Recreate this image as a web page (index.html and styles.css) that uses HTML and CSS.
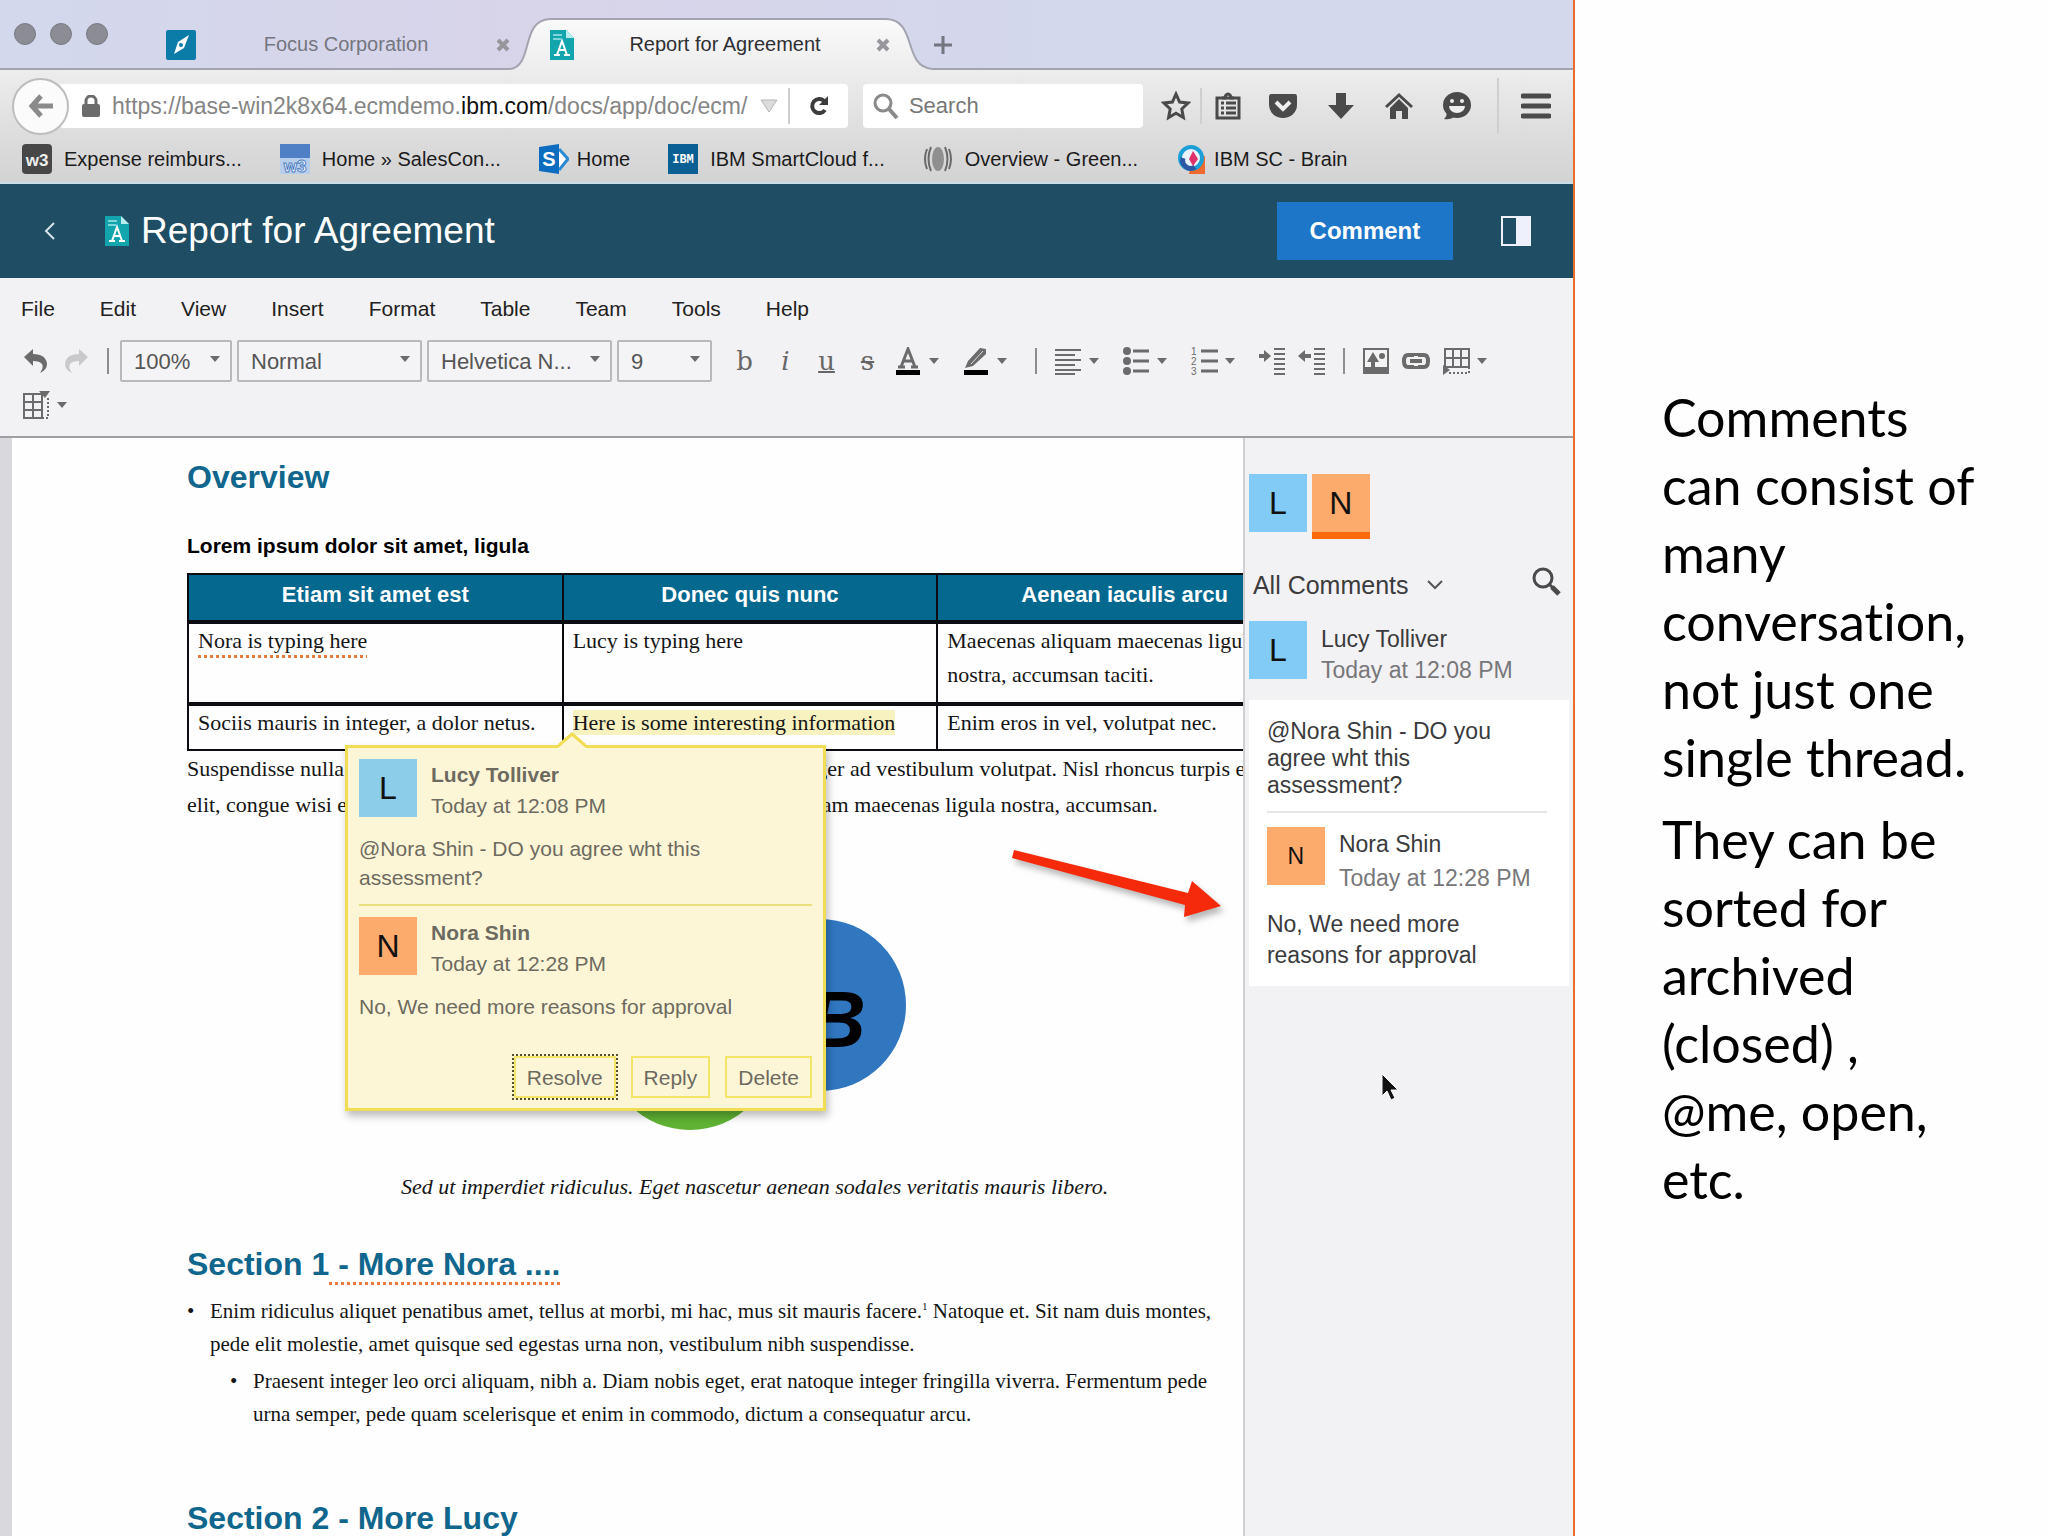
FILE: index.html
```html
<!DOCTYPE html>
<html lang="en">
<head>
<meta charset="utf-8">
<title>Report for Agreement</title>
<link rel="stylesheet" href="styles.css">
</head>
<body>
<svg class="sprite" aria-hidden="true">
  <symbol id="caret" viewBox="0 0 12 12"><path d="M1 3h10L6 9z" fill="#6b6b6b"/></symbol>
  <symbol id="docfile" viewBox="0 0 24 30">
    <path d="M0 0h16l8 8v22H0z" fill="#12a5ae"/><path d="M16 0l8 8h-8z" fill="#b9ecee"/>
    <path d="M3 5h9M3 9h8" stroke="#7fd6da" stroke-width="2"/>
    <path d="M4 25h6M14 25h6M7 25l5-14 5 14M9 20h6" stroke="#fff" stroke-width="2" fill="none"/>
  </symbol>
  <symbol id="cross" viewBox="0 0 14 14"><path d="M2 2l10 10M12 2L2 12" stroke="#96969c" stroke-width="4"/></symbol>
</svg>

<div class="slide">
  <main class="shot">
    <div class="tabs">
      <div class="lights"><i></i><i></i><i></i></div>
      <div class="tab">
        <svg class="ic30" viewBox="0 0 30 30"><rect width="30" height="30" rx="2" fill="#0b7ba8"/><path d="M8 24l4-12 11-7-5 13z" fill="#fff"/><circle cx="15" cy="15" r="2" fill="#0b7ba8"/></svg>
        <span>Focus Corporation</span>
        <button class="bare" aria-label="Close tab"><svg class="ic14" ><use href="#cross"/></svg></button>
      </div>
      <div class="tab active">
        <svg class="tab-shape" viewBox="0 0 422 70" preserveAspectRatio="none">
          <defs><linearGradient id="tg" x2="0" y2="1"><stop offset="0" stop-color="#fafafb"/><stop offset="1" stop-color="#ededee"/></linearGradient></defs>
          <path d="M0 69C24 66 10 20 40 19H376C408 20 392 66 422 69V70H0z" fill="url(#tg)"/>
          <path d="M0 69C24 66 10 20 40 19H376C408 20 392 66 422 69" fill="none" stroke="#a3a4af" stroke-width="2"/>
        </svg>
        <svg class="ic24"><use href="#docfile"/></svg>
        <span>Report for Agreement</span>
        <button class="bare" aria-label="Close tab"><svg class="ic14"><use href="#cross"/></svg></button>
      </div>
      <button class="bare plus" aria-label="New tab"><svg viewBox="0 0 18 18" class="ic18"><path d="M9 0v18M0 9h18" stroke="#73757f" stroke-width="3"/></svg></button>
    </div>

    <div class="nav">
      <button class="bare back" aria-label="Back"><svg viewBox="0 0 28 28" class="ic28"><path d="M14 4L5 14l9 10M6 14h20" fill="none" stroke="#8b8b8b" stroke-width="5"/></svg></button>
      <div class="url">
        <svg viewBox="0 0 18 22" class="lock"><rect y="9" width="18" height="13" rx="2" fill="#6c6c6c"/><path d="M4 10V6a5 5 0 0 1 10 0v4" fill="none" stroke="#6c6c6c" stroke-width="3"/></svg>
        <a href="#" class="address">https://base-win2k8x64.ecmdemo.<b>ibm.com</b>/docs/app/doc/ecm/</a>
        <svg viewBox="0 0 18 14" class="drop"><path d="M1 1h16L9 13z" fill="#dcdcdc" stroke="#b5b5b5"/></svg>
        <i class="rule"></i>
        <button class="bare reload" aria-label="Reload"><svg viewBox="0 0 22 22" class="ic22"><path d="M17 15a7 7 0 1 1-1-9" fill="none" stroke="#3c3c3c" stroke-width="4"/><path d="M20 1v9h-9z" fill="#3c3c3c"/></svg></button>
      </div>
      <label class="search">
        <svg viewBox="0 0 26 26" class="ic26"><circle cx="10" cy="10" r="8" fill="none" stroke="#8a8a8a" stroke-width="3"/><path d="M16 16l8 9" stroke="#8a8a8a" stroke-width="4"/></svg>
        <input type="text" placeholder="Search" aria-label="Search">
      </label>
      <button class="bare star" aria-label="Bookmark this page"><svg viewBox="0 0 30 30" class="ic30"><path d="M15 3l3.600 8 8.400 1-6.200 6 1.600 8.500-7.400-4.300-7.400 4.300L9.200 18 3 12l8.400-1z" fill="none" stroke="#4a4a4a" stroke-width="3"/></svg></button>
      <i class="rule"></i>
      <button class="bare" aria-label="Bookmarks"><svg viewBox="0 0 28 28" class="ic28"><path d="M3 6h22v20H3z" fill="none" stroke="#4a4a4a" stroke-width="3"/><path d="M8 6h3a3 4 0 0 1 6 0h3" fill="none" stroke="#4a4a4a" stroke-width="3"/><path d="M7 11h3M12 11h10M7 16h3M12 16h10M7 21h3M12 21h10" stroke="#4a4a4a" stroke-width="3"/></svg></button>
      <button class="bare" aria-label="Pocket"><svg viewBox="0 0 30 28" class="ic30"><path d="M3 2h24q2 0 2 3v8a14 13 0 0 1-28 0V5q0-3 2-3z" fill="#4a4a4a"/><path d="M8 10l7 7 7-7" fill="none" stroke="#eee" stroke-width="4"/></svg></button>
      <button class="bare" aria-label="Downloads"><svg viewBox="0 0 28 28" class="ic28"><path d="M9 1h10v12h8L14 27 1 13h8z" fill="#4a4a4a"/></svg></button>
      <button class="bare" aria-label="Home"><svg viewBox="0 0 28 28" class="ic28"><path d="M1 15L14 3l13 12" fill="none" stroke="#4a4a4a" stroke-width="3"/><path d="M5 16l9-9 9 9v11h-6v-8h-6v8H5z" fill="#4a4a4a"/></svg></button>
      <button class="bare" aria-label="Chat"><svg viewBox="0 0 30 30" class="ic30"><ellipse cx="15" cy="14" rx="14" ry="13" fill="#4a4a4a"/><path d="M4 19q2 6-2 9 7 1 11-3z" fill="#4a4a4a"/><circle cx="10" cy="10" r="2" fill="#eee"/><circle cx="20" cy="10" r="2" fill="#eee"/><path d="M7 15h16a8 7 0 0 1-16 0z" fill="#eee"/></svg></button>
      <i class="rule tall"></i>
      <button class="bare burger" aria-label="Menu"><svg viewBox="0 0 30 26" class="ic30"><path d="M2 3h26M2 13h26M2 23h26" stroke="#4a4a4a" stroke-width="5" stroke-linecap="round"/></svg></button>
    </div>

    <nav class="bookmarks">
      <a href="#"><svg viewBox="0 0 30 30" class="ic30"><rect width="30" height="30" rx="4" fill="#474747"/><text x="15" y="22" text-anchor="middle" class="logo-w3" fill="#eee">w3</text></svg>Expense reimburs...</a>
      <a href="#"><svg viewBox="0 0 30 30" class="ic30"><rect width="30" height="18" fill="#4f7fc4"/><rect y="14" width="30" height="16" fill="#b7cdec"/><text x="15" y="28" text-anchor="middle" class="logo-w3" fill="#fff" stroke="#4f7fc4">w3</text></svg>Home » SalesCon...</a>
      <a href="#" class="compact"><svg viewBox="0 0 30 30" class="ic30"><path d="M20 5l9 10-9 11" fill="#fff" stroke="#2a8ad4" stroke-width="3"/><path d="M0 3l20-3v30L0 27z" fill="#0b6cc0"/><text x="10" y="22" text-anchor="middle" class="logo-s" fill="#fff">S</text></svg>Home</a>
      <a href="#"><svg viewBox="0 0 30 30" class="ic30"><rect width="30" height="30" fill="#0a5f93"/><text x="15" y="19" text-anchor="middle" class="logo-ibm" fill="#fff">IBM</text></svg>IBM SmartCloud f...</a>
      <a href="#"><svg viewBox="0 0 30 30" class="ic30"><path d="M8 3Q3 15 8 27M4 5q-4 10 0 20M22 3q5 12 0 24M26 5q4 10 0 20" fill="none" stroke="#6a6a6a" stroke-width="2"/><ellipse cx="15" cy="15" rx="6" ry="12" fill="#8f8f8f"/></svg>Overview - Green...</a>
      <a href="#" class="compact"><svg viewBox="0 0 30 30" class="ic30"><path d="M16 16L29 12V30H13z" fill="#ee6a2f"/><circle cx="15" cy="14" r="11" fill="#e9f2f8" stroke="#1b9fd6" stroke-width="4"/><path d="M7 14a8 8 0 0 0 12 9" fill="none" stroke="#2b57a5" stroke-width="5"/><path d="M17 7l5 8-5 7-4-7z" fill="#e0316b"/></svg>IBM SC - Brain</a>
    </nav>

    <header class="titlebar">
      <button class="bare" aria-label="Go back"><svg viewBox="0 0 12 18" class="chev"><path d="M10 1L2 9l8 8" fill="none" stroke="#d5e4ec" stroke-width="2"/></svg></button>
      <svg class="ic24"><use href="#docfile"/></svg>
      <h1>Report for Agreement</h1>
      <button class="primary">Comment</button>
      <button class="bare" aria-label="Toggle sidebar"><svg viewBox="0 0 30 30" class="ic30"><path d="M1 1h28v28H1z" fill="none" stroke="#eef1fb" stroke-width="2"/><path d="M15 0h15v30H15z" fill="#eef1fb"/></svg></button>
    </header>

    <div class="menubar">
      <a href="#">File</a><a href="#">Edit</a><a href="#">View</a><a href="#">Insert</a><a href="#">Format</a><a href="#">Table</a><a href="#">Team</a><a href="#">Tools</a><a href="#">Help</a>
    </div>

    <div class="toolbar">
      <button class="bare tool" aria-label="Undo"><svg viewBox="0 0 26 26" class="ic26"><path d="M1 9l9-8v5q13 0 14 10 0 6-7 9 4-6 2-9-2-3-9-3v5z" fill="#6b6b6b"/></svg></button>
      <button class="bare tool" aria-label="Redo"><svg viewBox="0 0 26 26" class="ic26"><path d="M25 9l-9-8v5Q3 6 2 16q0 6 7 9-4-6-2-9 2-3 9-3v5z" fill="#c9c9cb"/></svg></button>
      <i class="sep"></i>
      <label class="pick w-zoom"><select aria-label="Zoom"><option>100%</option></select><svg class="ic12"><use href="#caret"/></svg></label>
      <label class="pick w-wide"><select aria-label="Style"><option>Normal</option></select><svg class="ic12"><use href="#caret"/></svg></label>
      <label class="pick w-wide"><select aria-label="Font"><option>Helvetica N...</option></select><svg class="ic12"><use href="#caret"/></svg></label>
      <label class="pick w-size"><select aria-label="Size"><option>9</option></select><svg class="ic12"><use href="#caret"/></svg></label>
      <button class="bare tool letter">b</button>
      <button class="bare tool letter"><em>i</em></button>
      <button class="bare tool letter"><u>u</u></button>
      <button class="bare tool letter"><s>s</s></button>
      <button class="bare tool-menu" aria-label="Text colour"><svg viewBox="0 0 28 28" class="ic28"><path d="M4 20h7M17 20h7M7 20l7-18 7 18M10 14h8" fill="none" stroke="#6b6b6b" stroke-width="3"/><path d="M2 23h24v5H2z"/></svg><svg class="ic12"><use href="#caret"/></svg></button>
      <button class="bare tool-menu" aria-label="Highlight"><svg viewBox="0 0 28 28" class="ic28"><path d="M3 21l3-7L18 1l6 1v5L11 19z" fill="#6b6b6b"/><path d="M9 17L21 4" stroke="#ddd"/><path d="M2 23h24v5H2z"/></svg><svg class="ic12"><use href="#caret"/></svg></button>
      <i class="sep"></i>
      <button class="bare tool-menu" aria-label="Align"><svg viewBox="0 0 28 28" class="ic28"><path d="M1 3h26M1 8h20M1 13h26M1 18h20M1 23h26M1 27h20" stroke="#6b6b6b" stroke-width="2"/></svg><svg class="ic12"><use href="#caret"/></svg></button>
      <button class="bare tool-menu" aria-label="Bullets"><svg viewBox="0 0 28 28" class="ic28"><path d="M11 4h16M11 14h16M11 24h16" stroke="#6b6b6b" stroke-width="3"/><circle cx="5" cy="4" r="4" fill="#6b6b6b"/><circle cx="5" cy="14" r="4" fill="#6b6b6b"/><circle cx="5" cy="24" r="4" fill="#6b6b6b"/></svg><svg class="ic12"><use href="#caret"/></svg></button>
      <button class="bare tool-menu" aria-label="Numbering"><svg viewBox="0 0 28 28" class="ic28"><path d="M11 4h17M11 14h17M11 24h17" stroke="#6b6b6b" stroke-width="3"/><g class="nums" fill="#6b6b6b"><text x="1" y="8">1</text><text x="1" y="18">2</text><text x="1" y="28">3</text></g></svg><svg class="ic12"><use href="#caret"/></svg></button>
      <button class="bare tool" aria-label="Indent"><svg viewBox="0 0 28 28" class="ic28"><path d="M16 2h11M16 7h11M16 12h11M16 17h11M16 22h11M16 27h11" stroke="#6b6b6b" stroke-width="2"/><path d="M1 9h6" stroke="#6b6b6b" stroke-width="4"/><path d="M6 3l7 6-7 6z" fill="#6b6b6b"/></svg></button>
      <button class="bare tool" aria-label="Outdent"><svg viewBox="0 0 28 28" class="ic28"><path d="M16 2h11M16 7h11M16 12h11M16 17h11M16 22h11M16 27h11" stroke="#6b6b6b" stroke-width="2"/><path d="M6 9h7" stroke="#6b6b6b" stroke-width="4"/><path d="M7 3L0 9l7 6z" fill="#6b6b6b"/></svg></button>
      <i class="sep"></i>
      <button class="bare tool" aria-label="Image"><svg viewBox="0 0 28 28" class="ic28"><path d="M2 2h24v24H2z" fill="#f4f4f4" stroke="#6b6b6b" stroke-width="2"/><path d="M2 20h24v7H2z" fill="#6b6b6b"/><path d="M11 5l6 10h-4v6H9v-6H5z" fill="#6b6b6b"/><circle cx="20" cy="9" r="3" fill="#6b6b6b"/></svg></button>
      <button class="bare tool" aria-label="Link"><svg viewBox="0 0 28 28" class="ic28"><path d="M12 9V8H6q-4 0-4 6t4 6h6v-1M16 9V8h6q4 0 4 6t-4 6h-6v-1M8 14h12" fill="none" stroke="#6b6b6b" stroke-width="4"/></svg></button>
      <button class="bare tool-menu" aria-label="Insert row"><svg viewBox="0 0 28 28" class="ic28"><path d="M3 2h24v18H3zM11 2v18M19 2v18M3 11h24" fill="none" stroke="#6b6b6b" stroke-width="2"/><path d="M27 20v6H6" fill="none" stroke="#6b6b6b" stroke-width="2" stroke-dasharray="2 2"/><path d="M1 18l7 5-7 5z" fill="#6b6b6b"/></svg><svg class="ic12"><use href="#caret"/></svg></button>
      <button class="bare tool-menu" aria-label="Insert column"><svg viewBox="0 0 28 28" class="ic28"><path d="M2 3h18v24H2zM2 11h18M2 19h18M11 3v24" fill="none" stroke="#6b6b6b" stroke-width="2"/><path d="M20 27h6V6" fill="none" stroke="#6b6b6b" stroke-width="2" stroke-dasharray="2 2"/><path d="M17 0h11l-5 7z" fill="#6b6b6b"/></svg><svg class="ic12"><use href="#caret"/></svg></button>
    </div>

    <div class="workspace">
      <article class="page">
        <div class="flow">
          <h2>Overview</h2>
          <h3>Lorem ipsum dolor sit amet, ligula</h3>
          <table>
            <thead><tr><th>Etiam sit amet est</th><th>Donec quis nunc</th><th>Aenean iaculis arcu</th></tr></thead>
            <tbody>
              <tr><td><span class="edited">Nora is typing here</span></td><td>Lucy is typing here</td><td>Maecenas aliquam maecenas ligula<br>nostra, accumsan taciti.</td></tr>
              <tr><td>Sociis mauris in integer, a dolor netus.</td><td><mark>Here is some interesting information</mark></td><td>Enim eros in vel, volutpat nec.</td></tr>
            </tbody>
          </table>
          <p>Suspendisse nulla pretium, rhoncus tempor fermentum, enim quam integer ad vestibulum volutpat. Nisl rhoncus turpis est,<br>elit, congue wisi enim nec ultricies sit, magna tincidunt. Maecenas aliquam maecenas ligula nostra, accumsan.</p>
          <figure>
            <svg viewBox="0 0 1126 346" class="chart">
              <circle cx="503" cy="221" r="86" fill="#5fb233"/>
              <circle cx="633" cy="182" r="86" fill="#3077c0"/>
              <text x="621" y="224" class="chart-letter">B</text>
            </svg>
            <figcaption>Sed ut imperdiet ridiculus. Eget nascetur aenean sodales veritatis mauris libero.</figcaption>
          </figure>
          <h2 class="section">Section 1<span class="edited"> - More Nora ....</span></h2>
          <ul>
            <li>Enim ridiculus aliquet penatibus amet, tellus at morbi, mi hac, mus sit mauris facere.<sup>1</sup> Natoque et. Sit nam duis montes,<br>pede elit molestie, amet quisque sed egestas urna non, vestibulum nibh suspendisse.
              <ul><li>Praesent integer leo orci aliquam, nibh a. Diam nobis eget, erat natoque integer fringilla viverra. Fermentum pede<br>urna semper, pede quam scelerisque et enim in commodo, dictum a consequatur arcu.</li></ul>
            </li>
          </ul>
          <h2 class="section last">Section 2 - More Lucy</h2>
        </div>

        <svg class="pointer-arrow" viewBox="0 0 224 80"><path d="M4 3L2 11 175 58l-1 12 37-11-29-25-4 12z" fill="#f42a0a"/></svg>

        <section class="popup">
          <svg class="notch" viewBox="0 0 28 16"><path d="M0 16L14 2l14 14z" fill="#fdf6d6"/><path d="M0 14L14 2l14 12" fill="none" stroke="#f1dd55" stroke-width="3"/></svg>
          <div class="person"><span class="avatar l">L</span><div><strong>Lucy Tolliver</strong><br>Today at 12:08 PM</div></div>
          <p>@Nora Shin - DO you agree wht this assessment?</p>
          <hr>
          <div class="person"><span class="avatar n">N</span><div><strong>Nora Shin</strong><br>Today at 12:28 PM</div></div>
          <p>No, We need more reasons for approval</p>
          <div class="actions"><button class="focused">Resolve</button><button>Reply</button><button>Delete</button></div>
        </section>
      </article>

      <aside class="comments">
        <div class="people"><span class="avatar l">L</span><span class="avatar n current">N</span></div>
        <div class="filter">
          <button class="bare">All Comments<svg viewBox="0 0 16 10" class="down"><path d="M1 1l7 7 7-7" fill="none" stroke="#555" stroke-width="2"/></svg></button>
          <button class="bare" aria-label="Search comments"><svg viewBox="0 0 30 30" class="ic30"><circle cx="12" cy="11" r="9" fill="none" stroke="#4a4a4a" stroke-width="3"/><path d="M18 17l4 4" stroke="#4a4a4a" stroke-width="3"/><path d="M21 20l7 7" stroke="#4a4a4a" stroke-width="5"/></svg></button>
        </div>
        <div class="person"><span class="avatar l">L</span><div>Lucy Tolliver<br><time>Today at 12:08 PM</time></div></div>
        <div class="card">
          <p class="tight">@Nora Shin - DO you agree wht this assessment?</p>
          <hr>
          <div class="person"><span class="avatar n small">N</span><div>Nora Shin<br><time>Today at 12:28 PM</time></div></div>
          <p>No, We need more reasons for approval</p>
        </div>
        <svg class="cursor" viewBox="0 0 18 28"><path d="M1 1v22l5-5 4 9 4-2-4-8h7z" fill="#111" stroke="#fff"/></svg>
      </aside>
    </div>
  </main>

  <section class="notes">
    <p>Comments can consist of many conversation, not just one single thread.</p>
    <p>They can be sorted for archived (closed) , @me, open, etc.</p>
  </section>
</div>
</body>
</html>
```
FILE: styles.css
```css
* { box-sizing: border-box; }
body {
  margin: 0;
  background: #fdfefd;
  color: #000;
  font-family: "Liberation Sans", Arial, sans-serif;
}
h1, h2, h3, p, ul, figure { margin: 0; padding: 0; }
button, input, select { font: inherit; color: inherit; }
a { color: inherit; text-decoration: none; }
svg { display: block; flex: none; }
.sprite { position: absolute; width: 0; height: 0; }
.bare {
  display: flex; align-items: center; justify-content: center;
  padding: 0; border: 0; background: none;
}
.ic12 { width: 12px; height: 12px; }
.ic14 { width: 14px; height: 14px; }
.ic18 { width: 18px; height: 18px; }
.ic22 { width: 22px; height: 22px; }
.ic24 { width: 24px; height: 30px; }
.ic26 { width: 26px; height: 26px; }
.ic28 { width: 28px; height: 28px; }
.ic30 { width: 30px; height: 30px; }

.slide {
  display: grid;
  grid-template-columns: 769fr 231fr;
  height: 100vh;
  overflow: hidden;
}
.shot {
  display: flex; flex-direction: column;
  min-width: 0; min-height: 0;
  border-right: 2px solid #ea6d2c;
  background: #f2f1f3;
}

/* browser tabs */
.tabs {
  display: flex;
  height: 70px; flex: none;
  border-bottom: 2px solid #a3a4af;
  background: linear-gradient(90deg, #d3d8ec, #d8d4ea 35%, #d3d8ec 70%);
}
.lights { display: flex; gap: 14px; width: 150px; padding: 23px 0 0 14px; }
.lights i { width: 22px; height: 22px; border-radius: 50%; background: #8b8c94; border: 1px solid #777982; }
.tab {
  position: relative;
  display: flex; align-items: center;
  width: 360px; height: 70px;
  padding: 19px 0 0 16px;
  font-size: 20px; color: #75767f;
}
.tab > * { position: relative; }
.tab span { flex: 1; text-align: center; }
.tab.active { width: 422px; padding: 19px 42px 0 40px; color: #2f2f33; }
.tab.active .tab-shape { position: absolute; left: 0; top: 0; width: 100%; height: 70px; }
.plus { padding: 22px 0 0 2px; }

/* address row */
.nav {
  display: flex; align-items: center;
  height: 72px; flex: none;
  padding-left: 12px;
  background: linear-gradient(#ededee, #dbdbdb);
}
.back {
  position: relative; z-index: 1;
  width: 57px; height: 57px;
  border: 2px solid #bdbdbd; border-radius: 50%;
  background: #fbfbfb;
}
.url {
  display: flex; align-items: center; flex: 1;
  min-width: 0; height: 44px;
  margin-left: -10px; padding-left: 23px;
  border-radius: 4px;
  background: #fff;
}
.lock { width: 18px; height: 22px; }
.address { flex: 1; padding-left: 12px; font-size: 23px; color: #858585; white-space: nowrap; overflow: hidden; }
.address b { font-weight: 400; color: #111; }
.drop { width: 18px; height: 14px; }
.rule { width: 2px; height: 36px; background: #cfcfcf; }
.url .rule { margin-left: 10px; }
.reload { width: 58px; }
.search {
  display: flex; align-items: center; gap: 10px;
  width: 280px; height: 44px;
  margin: 0 9px 0 15px; padding-left: 10px;
  border-radius: 4px;
  background: #fff;
}
.search input { width: 200px; border: 0; padding: 0; outline: 0; background: none; font-size: 22px; }
.search input::placeholder { color: #777; opacity: 1; }
.nav > .bare:not(.back) { width: 58px; height: 44px; }
.nav > .bare.star { width: 48px; }
.nav > .rule + .bare:not(.burger) { width: 52px; }
.nav .tall { height: 56px; margin-left: 11px; }
.nav > .bare.burger { width: 74px; }

.bookmarks {
  display: flex; gap: 38px;
  height: 42px; flex: none;
  padding: 2px 22px 0;
  border-bottom: 2px solid #cbdde9;
  background: linear-gradient(#dbdbdb, #d3d3d4);
  font-size: 20px; line-height: 30px; color: #1b1b1b;
}
.bookmarks a { display: flex; gap: 12px; white-space: nowrap; }
.bookmarks .compact { gap: 8px; }
.logo-w3 { font: bold 17px "Liberation Sans", sans-serif; }
.logo-s { font: bold 20px "Liberation Sans", sans-serif; }
.logo-ibm { font: bold 12px "Liberation Mono", monospace; }

/* document title */
.titlebar {
  display: flex; align-items: center;
  height: 94px; flex: none;
  padding: 0 42px 0 44px;
  background: #1e4d64;
  color: #fff;
}
.chev { width: 12px; height: 18px; }
.titlebar > .ic24 { margin: 0 12px 0 49px; }
.titlebar h1 { flex: 1; font-size: 37px; font-weight: 400; }
.primary {
  width: 176px; height: 58px;
  margin-right: 48px;
  border: 0; background: #1d76c8;
  font-size: 24px; font-weight: 700;
}

.menubar {
  display: flex; gap: 45px;
  padding: 16px 21px;
  font-size: 21px; line-height: 30px; color: #222;
}
.toolbar {
  display: flex; flex-wrap: wrap; align-items: center;
  row-gap: 8px; flex: none;
  padding: 0 30px 16px 16px;
  border-bottom: 2px solid #9f9fa3;
}
.tool { width: 40px; height: 30px; }
.tool-menu { width: 68px; height: 30px; gap: 6px; padding: 0 16px 0 6px; }
.sep { width: 2px; height: 26px; margin: 0 11px; background: #8d8d8d; }
.letter { width: 41px; font: 26px "DejaVu Serif", serif; color: #666; }
.letter u { text-decoration-thickness: 2px; }
.nums { font: 10px "Liberation Sans", sans-serif; }
.pick { position: relative; height: 42px; margin-right: 5px; }
.pick select {
  appearance: none;
  width: 100%; height: 100%;
  padding: 0 12px;
  border: 2px solid #b9b9bb; border-radius: 2px;
  background: #f4f3f5;
  font-size: 22px; color: #555;
}
.pick svg { position: absolute; right: 11px; top: 13px; }
.w-zoom { width: 112px; }
.w-wide { width: 185px; }
.w-size { width: 95px; margin-right: 12px; }

/* document */
.workspace { display: flex; flex: 1; min-height: 0; }
.page {
  position: relative;
  flex: 1; min-width: 0;
  overflow: hidden;
  border-left: 12px solid #d9d8dc;
  border-right: 2px solid #cfcfd2;
  background: #fefefe;
}
.flow { width: 1301px; padding: 19px 0 0 175px; font: 22px/36px "Liberation Serif", "Times New Roman", serif; color: #151515; }
h2, h3, th { font-family: "Liberation Sans", Arial, sans-serif; }
h2 { font-size: 32px; line-height: 40px; color: #10668c; }
h3 { margin: 36px 0 14px; font-size: 21px; line-height: 26px; color: #000; }
table { width: 1126px; table-layout: fixed; border-collapse: collapse; }
th, td { border: 2px solid #0b0b12; text-align: left; vertical-align: top; }
th { height: 48px; padding: 0; background: #05688f; color: #fff; font-size: 22px; line-height: 40px; text-align: center; border-bottom-width: 4px; }
td { padding: 0 9px; line-height: 34px; }
tbody tr:first-child td { height: 82px; border-bottom-width: 4px; }
tbody tr:last-child td { height: 46px; }
mark { background: #f8f2c0; color: inherit; }
.edited { text-decoration: underline dotted #e57a3c 3px; text-underline-offset: 7px; }
.flow p { white-space: nowrap; }
.chart { width: 100%; height: 346px; }
.chart-letter { font: italic bold 80px "Liberation Sans", sans-serif; }
figcaption { padding-left: 214px; font-style: italic; }
.section { margin: 39px 0 11px; }
.section.last { margin: 67px 0 0; }
.flow ul { list-style: none; font-size: 21px; line-height: 33px; white-space: nowrap; }
.flow li { position: relative; padding-left: 23px; }
.flow li::before { content: "•"; position: absolute; left: 0; }
.flow li ul { padding: 4px 0 0 20px; }
sup { font-size: 11px; line-height: 0; }
.pointer-arrow { position: absolute; left: 998px; top: 409px; width: 224px; height: 80px; filter: drop-shadow(3px 5px 3px #8889); }

.popup {
  position: absolute; left: 333px; top: 307px;
  width: 481px; padding: 11px 11px 10px;
  border: 3px solid #f1dd55;
  background: #fdf6d6;
  box-shadow: 2px 5px 8px #0004;
  font-size: 21px; line-height: 29px; color: #6d6a60;
}
.notch { position: absolute; left: 210px; top: -16px; width: 28px; height: 16px; }
.person { display: flex; gap: 14px; line-height: 31px; }
.avatar { width: 58px; height: 58px; flex: none; font-size: 32px; line-height: 58px; text-align: center; color: #111; }
.avatar.l { background: #83cbf7; }
.avatar.n { background: #fdaa6d; }
.popup .l { background: #8ccdea; }
.popup p { padding-top: 13px; }
.popup hr { margin: 12px 0 11px; border: 0; border-top: 2px solid #eadf7a; }
.actions { display: flex; justify-content: flex-end; align-items: center; gap: 15px; padding-top: 35px; }
.actions button {
  height: 42px; padding: 0 11px;
  border: 2px solid #f4e468; background: none;
}
.actions .focused { outline: 2px dotted #55502c; }

/* comment list */
.comments { position: relative; width: 328px; flex: none; padding: 36px 4px 0; font-size: 23px; color: #3b3b3d; }
.people { display: flex; gap: 5px; height: 65px; }
.avatar.current { height: 65px; border-bottom: 7px solid #fb6a0b; }
.filter { display: flex; justify-content: space-between; padding: 25px 8px 21px 4px; }
.filter button { height: 36px; font-size: 25px; }
.filter button:first-child { padding-top: 6px; }
.down { width: 16px; height: 10px; margin-left: 18px; }
.comments > .person > div { padding-top: 3px; }
time { color: #77777a; }
.card { margin-top: 14px; padding: 18px 22px 15px 18px; background: #fff; }
.card p { padding-top: 14px; line-height: 31px; }
.card .tight { padding: 0; line-height: 27px; }
.card hr { margin: 12px 0 14px; border: 0; border-top: 2px solid #e6e6e9; }
.card .person { line-height: 34px; }
.avatar.small { font-size: 23px; }
.cursor { position: absolute; left: 136px; top: 634px; width: 18px; height: 30px; }

/* slide text */
.notes { padding: 383px 60px 0 87px; font: 52px/68px Lato, "Open Sans", sans-serif; font-variant-ligatures: none; }
.notes p + p { margin-top: 14px; }
```
